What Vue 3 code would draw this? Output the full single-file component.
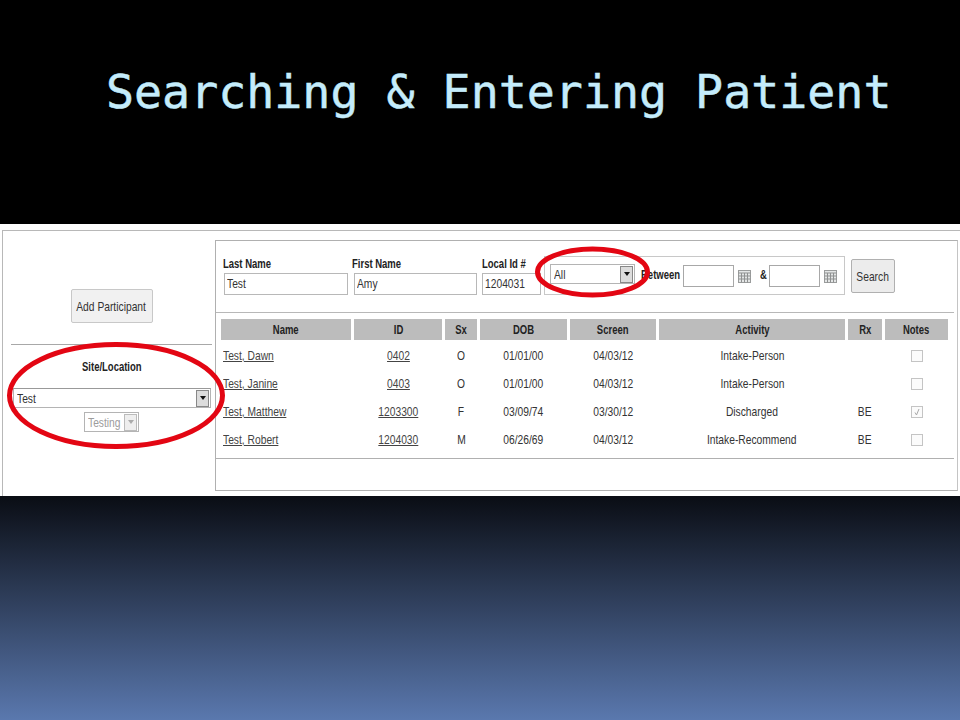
<script setup>
const cols = ['Name', 'ID', 'Sx', 'DOB', 'Screen', 'Activity', 'Rx', 'Notes']
const rows = [
  { name: 'Test, Dawn', id: '0402', sx: 'O', dob: '01/01/00', screen: '04/03/12', activity: 'Intake-Person', rx: '', checked: false },
  { name: 'Test, Janine', id: '0403', sx: 'O', dob: '01/01/00', screen: '04/03/12', activity: 'Intake-Person', rx: '', checked: false },
  { name: 'Test, Matthew', id: '1203300', sx: 'F', dob: '03/09/74', screen: '03/30/12', activity: 'Discharged', rx: 'BE', checked: true },
  { name: 'Test, Robert', id: '1204030', sx: 'M', dob: '06/26/69', screen: '04/03/12', activity: 'Intake-Recommend', rx: 'BE', checked: false }
]
</script>

<template>
  <div class="slide">
    <header class="head"><h1>Searching &amp; Entering Patient</h1></header>
    <section class="band">
      <div class="app">
        <aside class="side">
          <div class="add-wrap"><button class="btn add"><span class="t">Add Participant</span></button></div>
          <div class="site">
            <div class="site-label"><span class="t b">Site/Location</span></div>
            <div class="select wide"><span class="t l">Test</span><i class="arrow"><b></b></i></div>
            <div class="select testing"><span class="t l">Testing</span><i class="arrow off"><b></b></i></div>
          </div>
        </aside>
        <main class="panel">
          <div class="search">
            <div class="f f1"><span class="t b l">Last Name</span><div class="input"><span class="t l">Test</span></div></div>
            <div class="f f2"><span class="t b l">First Name</span><div class="input"><span class="t l">Amy</span></div></div>
            <div class="f f3"><span class="t b l">Local Id #</span><div class="input"><span class="t l">1204031</span></div></div>
            <div class="range">
              <div class="select all"><span class="t l">All</span><i class="arrow"><b></b></i></div>
              <span class="lbl between"><span class="t b l">Between</span></span>
              <div class="input date"></div>
              <svg class="cal" viewBox="0 0 13 13"><rect x=".5" y=".5" width="12" height="12" fill="#e4e6e6" stroke="#9a9c9c"/><path d="M.5 3h12M3.5 3v9.5M6.5 3v9.5M9.5 3v9.5M.5 6h12M.5 9h12" stroke="#8f9191" fill="none"/></svg>
              <span class="lbl amp"><span class="t b l">&amp;</span></span>
              <div class="input date"></div>
              <svg class="cal" viewBox="0 0 13 13"><rect x=".5" y=".5" width="12" height="12" fill="#e4e6e6" stroke="#9a9c9c"/><path d="M.5 3h12M3.5 3v9.5M6.5 3v9.5M9.5 3v9.5M.5 6h12M.5 9h12" stroke="#8f9191" fill="none"/></svg>
            </div>
            <button class="btn go"><span class="t">Search</span></button>
          </div>
          <div class="grid">
            <div class="thead">
              <div v-for="c in cols" :key="c" class="th"><span class="t b">{{ c }}</span></div>
            </div>
            <div v-for="r in rows" :key="r.name" class="tr">
              <div class="td left"><a class="t l">{{ r.name }}</a></div>
              <div class="td"><a class="t">{{ r.id }}</a></div>
              <div class="td"><span class="t">{{ r.sx }}</span></div>
              <div class="td"><span class="t">{{ r.dob }}</span></div>
              <div class="td"><span class="t">{{ r.screen }}</span></div>
              <div class="td"><span class="t">{{ r.activity }}</span></div>
              <div class="td"><span class="t">{{ r.rx }}</span></div>
              <div class="td"><span class="check"><svg v-if="r.checked" viewBox="0 0 10 10"><path d="M3 5.5l1.5 2.5 2.5-6" fill="none" stroke="#a9a9a9"/></svg></span></div>
            </div>
          </div>
          <div class="rule"></div>
        </main>
      </div>
      <svg class="rings" viewBox="0 0 960 272">
        <ellipse cx="116" cy="171.5" rx="106.5" ry="51" fill="none" stroke="#e30613" stroke-width="5"/>
        <ellipse cx="592.5" cy="48" rx="55" ry="23" fill="none" stroke="#e30613" stroke-width="5"/>
      </svg>
    </section>
    <div class="foot"></div>
  </div>
</template>

<style scoped>
.slide { width: 960px; height: 720px; display: flex; flex-direction: column; overflow: hidden; background: #000; font-family: "Liberation Sans", Arial, sans-serif; }
.head { height: 224px; box-sizing: border-box; padding: 63px 0 0 106px; }
h1 { margin: 0; font: 400 46.6px/58px "DejaVu Sans Mono", monospace; color: #c4ecfb; white-space: nowrap; -webkit-text-stroke: .5px #c4ecfb; }
.band { position: relative; height: 272px; background: #fff; padding: 6px 0 0 2px; box-sizing: border-box; overflow: hidden; }
.app { display: flex; border: 1px solid #b8b8b8; border-right: 0; height: 290px; box-sizing: border-box; font-size: 13px; color: #333; }
.t { display: inline-block; white-space: nowrap; transform: scaleX(.79); transform-origin: center; }
.t.b { font-weight: 700; transform: scaleX(.73); color: #222; }
.t.l { transform-origin: left center; }
.side { width: 212px; flex: none; }
.add-wrap { height: 113px; box-sizing: border-box; padding-top: 58px; display: flex; justify-content: center; }
.btn { display: flex; align-items: center; justify-content: center; border: 1px solid #c8c8c8; border-radius: 2px; background: #f1f1f1; color: #333; font: inherit; padding: 0; white-space: nowrap; }
.add { width: 82px; height: 34px; margin-left: 5px; }
.site { margin: 0 0 0 8px; width: 201px; border-top: 1px solid #a8a8a8; text-align: center; }
.site-label { margin-top: 15px; height: 28px; line-height: 14px; }
.select { display: flex; align-items: center; justify-content: space-between; box-sizing: border-box; border: 1px solid #b4b4b4; background: #fff; text-align: left; }
.select .t { flex: 1 1 0; min-width: 0; }
.wide { width: 198px; height: 20px; margin-left: 2px; padding-left: 3px; border-top-color: #999; }
.testing { width: 55px; height: 20px; margin: 4px 0 0 73px; padding-left: 3px; color: #9c9c9c; }
.arrow { width: 13px; height: 17px; border: 1px solid #888; background: #dcdcdc; display: flex; align-items: center; justify-content: center; box-sizing: border-box; flex: none; margin-right: 1px; }
.arrow b { border: 3px solid transparent; border-top: 4px solid #111; border-bottom: 0; }
.arrow.off { border-color: #bbb; background: #eee; }
.arrow.off b { border-top-color: #aaa; }
.panel { flex: none; width: 743px; height: 251px; margin: 9px 0 0 0; box-sizing: border-box; border: 1px solid #b0b0b0; border-right-color: #c4c4c4; position: relative; }
.search { display: flex; height: 72px; box-sizing: border-box; border-bottom: 1px solid #b8b8b8; padding-left: 8px; margin-right: 3px; }
.f { display: flex; flex-direction: column; margin-top: 16px; }
.f > .t { height: 16px; line-height: 14px; }
.input { box-sizing: border-box; border: 1px solid #b8b8b8; height: 22px; line-height: 20px; padding-left: 2px; background: #fff; }
.f1 { width: 130px; }
.f1 > .t { margin-left: -1px; }
.f1 .input { width: 124px; }
.f2 { width: 128px; }
.f2 > .t { margin-left: -2px; }
.f2 .input { width: 123px; }
.f3 { width: 60px; }
.f3 .input { width: 59px; }
.range { margin: 15px 0 0 2px; width: 301px; height: 39px; box-sizing: border-box; border: 1px solid #c8c8c8; display: flex; align-items: center; padding: 0 0 3px 5px; flex: none; }
.all { width: 85px; height: 20px; padding-left: 3px; flex: none; }
.lbl { flex: none; }
.between { margin-left: 6px; width: 42px; }
.date { width: 51px; margin: 4px 0 0 0; height: 22px; border-color: #a8a8a8; flex: none; }
.cal { width: 13px; height: 13px; margin: 5px 0 0 4px; flex: none; }
.amp { margin: 0 0 0 9px; width: 9px; }
.go { width: 44px; height: 34px; margin: 18px 0 0 6px; border-color: #b0b0b0; background: #ececec; flex: none; }
.grid { margin: 6px 0 0 5px; width: 730px; }
.thead, .tr { display: grid; grid-template-columns: 133px 91px 35px 90px 89px 189px 37px 66px; }
.thead { height: 21px; margin-bottom: 2px; }
.th { background: #bcbcbc; margin-right: 3px; text-align: center; line-height: 21px; }
.tr { height: 28px; align-items: center; line-height: 14px; text-align: center; }
.td { margin-right: 3px; }
.left { text-align: left; padding-left: 2px; }
a { text-decoration: underline; color: #444; }
.check { display: block; width: 10px; height: 10px; border: 1px solid #c4c4c4; margin: 0 auto; background: #fbfbfb; }
.check svg { display: block; width: 10px; height: 10px; }
.rule { height: 1px; background: #b0b0b0; margin: 4px 3px 0 0; }
.rings { position: absolute; left: 0; top: 0; width: 960px; height: 272px; }
.foot { flex: 1; background: linear-gradient(#0a0d14, #5a78ae); }
</style>
